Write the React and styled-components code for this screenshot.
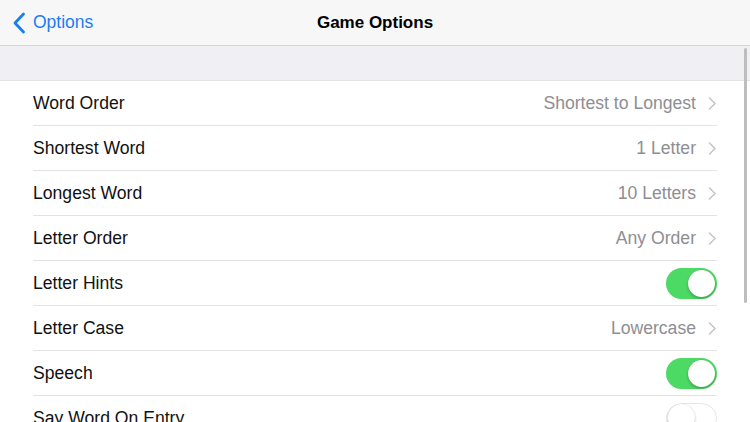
import React from 'react';
import styled, { createGlobalStyle } from 'styled-components';

const GlobalStyle = createGlobalStyle`
  html, body {
    margin: 0;
    padding: 0;
    background: #ffffff;
  }
  body {
    font-family: "Liberation Sans", Arial, sans-serif;
    -webkit-font-smoothing: antialiased;
  }
`;

const Page = styled.div`
  position: relative;
  width: 750px;
  height: 422px;
  overflow: hidden;
  background: #ffffff;
`;

const NavBar = styled.div`
  position: relative;
  height: 45px;
  display: flex;
  align-items: center;
  justify-content: center;
  background: #f7f7f8;
  border-bottom: 1px solid #d6d6da;
`;

const BackButton = styled.div`
  position: absolute;
  left: 12px;
  top: 0;
  height: 45px;
  display: flex;
  align-items: center;
  gap: 7px;
  color: #1b7cf4;
  font-size: 17.5px;
`;

const Title = styled.div`
  font-size: 17px;
  font-weight: bold;
  color: #000000;
`;

const SectionGap = styled.div`
  height: 34px;
  background: #efeff4;
  border-bottom: 1px solid #e3e3e8;
`;

const List = styled.div`
  display: flex;
  flex-direction: column;
`;

const Row = styled.div`
  padding-left: 33px;
  padding-right: 33px;
  background: #ffffff;
`;

const RowInner = styled.div`
  height: 44px;
  display: flex;
  align-items: center;
  justify-content: space-between;
  border-bottom: 1px solid #e3e3e6;
`;

const Label = styled.span`
  font-size: 17.6px;
  color: #111111;
  padding-top: 1px;
`;

const Detail = styled.div`
  display: flex;
  align-items: center;
  gap: 12px;
  padding-right: 1px;
  font-size: 17.6px;
  color: #8e8e93;
  padding-top: 1px;
`;

const Switch = styled.div`
  position: relative;
  width: 51px;
  height: 31px;
  box-sizing: border-box;
  border-radius: 16px;
  background: ${(p) => (p.on ? '#4cd964' : '#ffffff')};
  border: ${(p) => (p.on ? 'none' : '1.5px solid #e5e5ea')};
`;

const Knob = styled.div`
  position: absolute;
  top: ${(p) => (p.on ? '2px' : '0.5px')};
  left: ${(p) => (p.on ? '22px' : '0.5px')};
  width: 27px;
  height: 27px;
  border-radius: 50%;
  background: #ffffff;
  box-shadow: 0 2px 3px rgba(0, 0, 0, 0.22), 0 0 1px rgba(0, 0, 0, 0.2);
`;

const ScrollIndicator = styled.div`
  position: absolute;
  left: 744px;
  top: 48px;
  width: 3px;
  height: 255px;
  border-radius: 2px;
  background: #bdbdbd;
`;

const BackChevron = () => (
  <svg width="14" height="22" viewBox="0 0 14 22">
    <path d="M11.5 2 L3 11 L11.5 20" fill="none" stroke="#1b7cf4" strokeWidth="2.8" strokeLinecap="round" strokeLinejoin="round" />
  </svg>
);

const Chevron = () => (
  <svg width="8" height="13" viewBox="0 0 8 13">
    <path d="M1.5 1 L7 6.5 L1.5 12" fill="none" stroke="#c4c4c9" strokeWidth="1.5" strokeLinecap="round" strokeLinejoin="round" />
  </svg>
);

const rows = [
  { label: 'Word Order', value: 'Shortest to Longest' },
  { label: 'Shortest Word', value: '1 Letter' },
  { label: 'Longest Word', value: '10 Letters' },
  { label: 'Letter Order', value: 'Any Order' },
  { label: 'Letter Hints', toggle: true },
  { label: 'Letter Case', value: 'Lowercase' },
  { label: 'Speech', toggle: true },
  { label: 'Say Word On Entry', toggle: false },
];

export default function App() {
  return (
    <Page>
      <GlobalStyle />
      <NavBar>
        <BackButton>
          <BackChevron />
          <span>Options</span>
        </BackButton>
        <Title>Game Options</Title>
      </NavBar>
      <SectionGap />
      <List>
        {rows.map((row) => (
          <Row key={row.label}>
            <RowInner>
              <Label>{row.label}</Label>
              {row.value !== undefined ? (
                <Detail>
                  <span>{row.value}</span>
                  <Chevron />
                </Detail>
              ) : (
                <Switch on={row.toggle}>
                  <Knob on={row.toggle} />
                </Switch>
              )}
            </RowInner>
          </Row>
        ))}
      </List>
      <ScrollIndicator />
    </Page>
  );
}
